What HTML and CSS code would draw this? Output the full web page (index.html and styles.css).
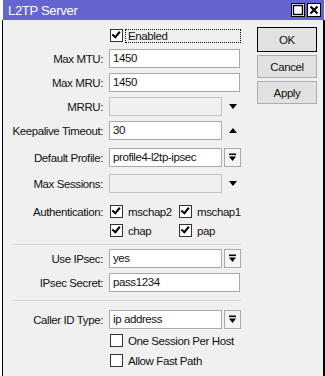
FILE: index.html
```html
<!DOCTYPE html>
<html>
<head>
<meta charset="utf-8">
<link rel="stylesheet" href="styles.css">
</head>
<body>
<div class="window">
  <div class="titlebar">
    <span class="title">L2TP Server</span>
    <div class="tbtns">
      <span class="tbtn"><svg width="12" height="12" viewBox="0 0 12 12"><rect x="1.5" y="1.5" width="9" height="9" fill="none" stroke="#000" stroke-width="1.4"/></svg></span>
      <span class="tbtn"><svg width="12" height="12" viewBox="0 0 12 12"><path d="M2.5 2.5 L9.5 9.5 M9.5 2.5 L2.5 9.5" stroke="#000" stroke-width="2.2"/></svg></span>
    </div>
  </div>
  <div class="body">
    <div class="form">
      <div class="row r-enabled">
        <span class="label"></span>
        <div class="ctl">
          <span class="cb on"></span>
          <span class="focus">Enabled</span>
        </div>
      </div>
      <div class="row r-mtu">
        <span class="label">Max MTU:</span>
        <div class="ctl"><span class="input full">1450</span></div>
      </div>
      <div class="row r-mru">
        <span class="label">Max MRU:</span>
        <div class="ctl"><span class="input full">1450</span></div>
      </div>
      <div class="row r-mrru">
        <span class="label">MRRU:</span>
        <div class="ctl"><span class="input short disabled"></span><span class="arrow down"></span></div>
      </div>
      <div class="row r-keep">
        <span class="label">Keepalive Timeout:</span>
        <div class="ctl"><span class="input short">30</span><span class="arrow up"></span></div>
      </div>
      <div class="row r-prof">
        <span class="label">Default Profile:</span>
        <div class="ctl"><span class="input short">profile4-l2tp-ipsec</span><span class="dd"><svg width="9" height="9" viewBox="0 0 9 9"><rect x="1" y="0.5" width="7" height="1.6" fill="#000"/><path d="M1 3.5 H8 L4.5 8 Z" fill="#000"/></svg></span></div>
      </div>
      <div class="row r-sess">
        <span class="label">Max Sessions:</span>
        <div class="ctl"><span class="input short disabled"></span><span class="arrow down"></span></div>
      </div>
      <div class="row r-auth1">
        <span class="label">Authentication:</span>
        <div class="ctl">
          <span class="opt"><span class="cb on"></span><span class="otext">mschap2</span></span>
          <span class="opt"><span class="cb on"></span><span class="otext">mschap1</span></span>
        </div>
      </div>
      <div class="row r-auth2">
        <span class="label"></span>
        <div class="ctl">
          <span class="opt"><span class="cb on"></span><span class="otext">chap</span></span>
          <span class="opt"><span class="cb on"></span><span class="otext">pap</span></span>
        </div>
      </div>
      <div class="sep s1"></div>
      <div class="row r-ipsec">
        <span class="label">Use IPsec:</span>
        <div class="ctl"><span class="input short">yes</span><span class="dd"><svg width="9" height="9" viewBox="0 0 9 9"><rect x="1" y="0.5" width="7" height="1.6" fill="#000"/><path d="M1 3.5 H8 L4.5 8 Z" fill="#000"/></svg></span></div>
      </div>
      <div class="row r-secret">
        <span class="label">IPsec Secret:</span>
        <div class="ctl"><span class="input full">pass1234</span></div>
      </div>
      <div class="sep s2"></div>
      <div class="row r-caller">
        <span class="label">Caller ID Type:</span>
        <div class="ctl"><span class="input short">ip address</span><span class="dd"><svg width="9" height="9" viewBox="0 0 9 9"><rect x="1" y="0.5" width="7" height="1.6" fill="#000"/><path d="M1 3.5 H8 L4.5 8 Z" fill="#000"/></svg></span></div>
      </div>
      <div class="row r-one">
        <span class="label"></span>
        <div class="ctl"><span class="cb"></span><span class="otext">One Session Per Host</span></div>
      </div>
      <div class="row r-fast">
        <span class="label"></span>
        <div class="ctl"><span class="cb"></span><span class="otext">Allow Fast Path</span></div>
      </div>
    </div>
    <div class="buttons">
      <span class="btn ok">OK</span>
      <span class="btn">Cancel</span>
      <span class="btn">Apply</span>
    </div>
  </div>
</div>
</body>
</html>
```
FILE: styles.css
```css
html, body {
  margin: 0;
  padding: 0;
  background: #ffffff;
}
body {
  width: 325px;
  height: 376px;
  overflow: hidden;
  font-family: "Liberation Sans", Arial, sans-serif;
  font-size: 11.5px;
  letter-spacing: -0.4px;
  color: #111;
}
.window {
  margin-left: 2px;
  width: 323px;
  height: 376px;
  display: flex;
  flex-direction: column;
}
.titlebar {
  margin-left: 1px;
  margin-right: 1px;
  height: 20px;
  background: #6565d2;
  display: flex;
  align-items: center;
  justify-content: space-between;
}
.title {
  color: #fff;
  font-size: 13px;
  letter-spacing: -0.3px;
  margin-left: 5px;
}
.tbtns {
  display: flex;
  gap: 2px;
  margin-right: 3px;
}
.tbtn {
  width: 14px;
  height: 14px;
  box-sizing: border-box;
  border: 1px solid #000;
  background: #fff;
  display: flex;
  align-items: center;
  justify-content: center;
}
.body {
  flex: 1;
  background: #f0f0f0;
  border-left: 1px solid #000;
  border-right: 2px solid #000;
  display: flex;
}
.form {
  width: 240px;
  display: flex;
  flex-direction: column;
}
.row {
  display: flex;
  align-items: center;
  height: 19px;
}
.label {
  width: 100px;
  text-align: right;
  padding-right: 6px;
  flex: none;
  white-space: nowrap;
}
.ctl {
  display: flex;
  align-items: center;
  height: 19px;
  white-space: nowrap;
}
.input {
  box-sizing: border-box;
  height: 19px;
  background: #fff;
  border: 1px solid #a9a9a9;
  padding-left: 3px;
  line-height: 17px;
  white-space: nowrap;
  overflow: hidden;
}
.input.full { width: 131px; }
.input.short { width: 113px; }
.input.disabled {
  background: #f0f0f0;
  border-color: #c4c4c4;
}
.arrow {
  width: 0;
  height: 0;
  margin-left: 7px;
  border-left: 4.5px solid transparent;
  border-right: 4.5px solid transparent;
}
.arrow.down { border-top: 5px solid #000; }
.arrow.up { border-bottom: 5px solid #000; }
.dd {
  box-sizing: border-box;
  width: 17px;
  height: 19px;
  margin-left: 2px;
  border: 1px solid #a9a9a9;
  background: #f4f4f4;
  display: flex;
  align-items: center;
  justify-content: center;
}
.cb {
  box-sizing: border-box;
  width: 13px;
  height: 13px;
  border: 1px solid #333;
  background: #fff;
  flex: none;
  margin-left: 1px;
  position: relative;
}
.cb.on::after {
  content: "";
  position: absolute;
  left: 2px;
  top: 0px;
  width: 3px;
  height: 6px;
  border-right: 2px solid #000;
  border-bottom: 2px solid #000;
  transform: rotate(40deg);
  transform-origin: 60% 60%;
}
.focus {
  margin-left: 2px;
  width: 116px;
  height: 14px;
  box-sizing: border-box;
  border: 1px dotted #000;
  padding-left: 2px;
  line-height: 12px;
}
.opt {
  display: flex;
  align-items: center;
  width: 69px;
}
.otext {
  margin-left: 5px;
}
.sep {
  height: 1px;
  background: #d8d8d8;
  margin-left: 9px;
  width: 229px;
}
.r-enabled { margin-top: 6px; }
.r-mtu { margin-top: 4px; }
.r-mru { margin-top: 5px; }
.r-mrru { margin-top: 5px; }
.r-keep { margin-top: 5px; }
.r-prof { margin-top: 8px; }
.r-sess { margin-top: 7px; }
.r-auth1 { margin-top: 9px; }
.r-auth2 { margin-top: 0px; }
.s1 { margin-top: 4px; }
.r-ipsec { margin-top: 4px; }
.r-secret { margin-top: 5px; }
.s2 { margin-top: 8px; }
.r-caller { margin-top: 9px; }
.r-one { margin-top: 2px; }
.r-fast { margin-top: 1px; }
.buttons {
  margin-left: 14px;
  margin-top: 7px;
  display: flex;
  flex-direction: column;
  gap: 3px;
}
.btn {
  box-sizing: border-box;
  width: 60px;
  height: 23px;
  border: 1px solid #adadad;
  background: #e1e1e1;
  display: flex;
  align-items: center;
  justify-content: center;
}
.btn.ok {
  height: 25px;
  border: 1px solid #000;
}
```
